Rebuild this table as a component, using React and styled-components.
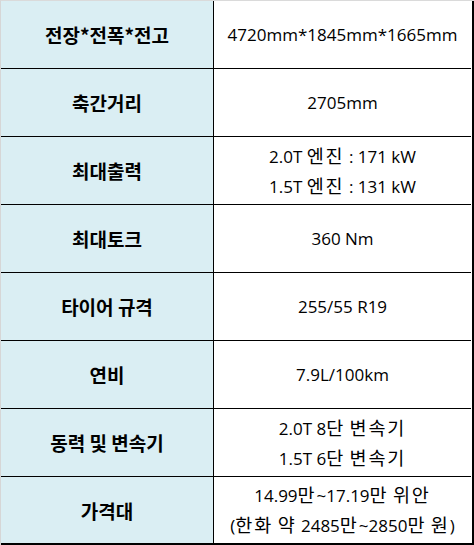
import React from 'react';
import styled, { createGlobalStyle } from 'styled-components';

const GlobalStyle = createGlobalStyle`
  html, body {
    margin: 0;
    padding: 0;
    background: #ffffff;
  }
`;

const Frame = styled.div`
  width: 473px;
  border-top: 1px solid #dadada;
  border-left: 1px solid #d6d6d6;
`;

const Grid = styled.div`
  display: grid;
  grid-template-columns: 213px 257px;
  border-right: 2px solid #000;
  border-bottom: 2px solid #000;
`;

const Label = styled.div`
  height: ${p => (p.$last ? '66px' : '67px')};
  background: #daeef3;
  border-right: 1px solid #000;
  border-bottom: ${p => (p.$last ? 'none' : '1px solid #000')};
  display: flex;
  align-items: center;
  justify-content: center;
  font-family: "Noto Sans CJK KR", "Open Sans", sans-serif;
  font-weight: 700;
  font-size: 19px;
  color: #000;
`;

const Value = styled.div`
  height: ${p => (p.$last ? '66px' : '67px')};
  border-bottom: ${p => (p.$last ? 'none' : '1px solid #000')};
  display: flex;
  flex-direction: column;
  align-items: center;
  justify-content: center;
  font-family: "Open Sans", "Noto Sans CJK KR", sans-serif;
  font-size: 17px;
  line-height: 28px;
  color: #000;
`;

const Line = styled.span`
  white-space: nowrap;
`;

// hangul in the value column is set a little larger and looser, like the sheet
const Hangul = styled.span`
  font-family: "Noto Sans CJK KR", sans-serif;
  font-size: 18.5px;
  letter-spacing: 1.9px;
`;

const rows = [
  ['전장*전폭*전고', ['4720mm*1845mm*1665mm']],
  ['축간거리', ['2705mm']],
  ['최대출력', ['2.0T 엔진 : 171 kW', '1.5T 엔진 : 131 kW']],
  ['최대토크', ['360 Nm']],
  ['타이어 규격', ['255/55 R19']],
  ['연비', ['7.9L/100km']],
  ['동력 및 변속기', ['2.0T 8단 변속기', '1.5T 6단 변속기']],
  ['가격대', ['14.99만~17.19만 위안', '(한화 약 2485만~2850만 원)']],
];

function mixed(text) {
  return text.split(/([\uAC00-\uD7A3]+)/).map((part, i) =>
    /[\uAC00-\uD7A3]/.test(part) ? <Hangul key={i}>{part}</Hangul> : part
  );
}

export default function App() {
  return (
    <>
      <GlobalStyle />
      <Frame>
        <Grid>
          {rows.map(([label, values], i) => {
            const last = i === rows.length - 1;
            return (
              <React.Fragment key={label}>
                <Label $last={last}>{label}</Label>
                <Value $last={last}>
                  {values.map(v => (
                    <Line key={v}>{mixed(v)}</Line>
                  ))}
                </Value>
              </React.Fragment>
            );
          })}
        </Grid>
      </Frame>
    </>
  );
}
